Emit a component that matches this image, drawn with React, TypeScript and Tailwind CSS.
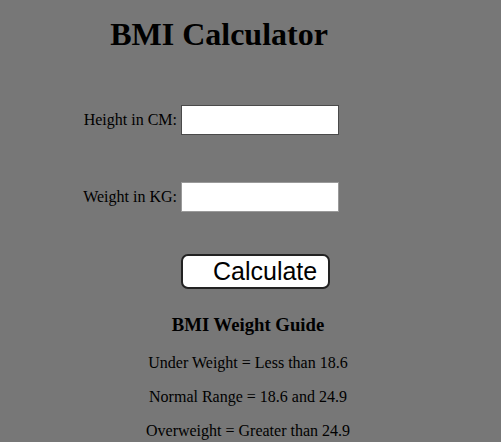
import React from "react";

const serif = "font-['Liberation_Serif','Times_New_Roman',serif]";

const Field: React.FC<{ label: string; className?: string; inputClass: string }> = ({
  label,
  className = "",
  inputClass,
}) => (
  <div className={`flex h-[30px] items-center ${className}`}>
    <label className="w-[177px] text-right text-[16px] leading-[18px] text-black">{label}</label>
    <input
      type="text"
      className={`ml-[4px] h-[30px] w-[158px] bg-white outline-none ${inputClass}`}
    />
  </div>
);

export default function App() {
  return (
    <div className={`min-h-[442px] w-[501px] bg-[#777777] ${serif} flex flex-col`}>
      <h1 className="mt-[16px] w-[438px] text-center text-[32px] font-bold leading-[37px] text-black">
        BMI Calculator
      </h1>

      <Field label="Height in CM:" className="mt-[52px]" inputClass="border border-[#4a4a4a]" />
      <Field label="Weight in KG:" className="mt-[47px]" inputClass="border border-[#9a9a9a]" />

      <div className="mt-[42px] flex pl-[181px]">
        <button className="flex h-[35px] w-[149px] items-center rounded-[7px] border-2 border-[#222] bg-white pl-[30px] font-['Liberation_Sans',Arial,sans-serif] text-[25px] leading-none text-black">
          Calculate
        </button>
      </div>

      <div className="flex w-[496px] flex-col items-center text-black">
        <h3 className="mt-[25px] text-[18.72px] font-bold leading-[22px]">BMI Weight Guide</h3>
        <p className="mt-[18px] text-[16px] leading-[18px]">Under Weight = Less than 18.6</p>
        <p className="mt-[16px] text-[16px] leading-[18px]">Normal Range = 18.6 and 24.9</p>
        <p className="mt-[16px] text-[16px] leading-[18px]">Overweight = Greater than 24.9</p>
      </div>
    </div>
  );
}
